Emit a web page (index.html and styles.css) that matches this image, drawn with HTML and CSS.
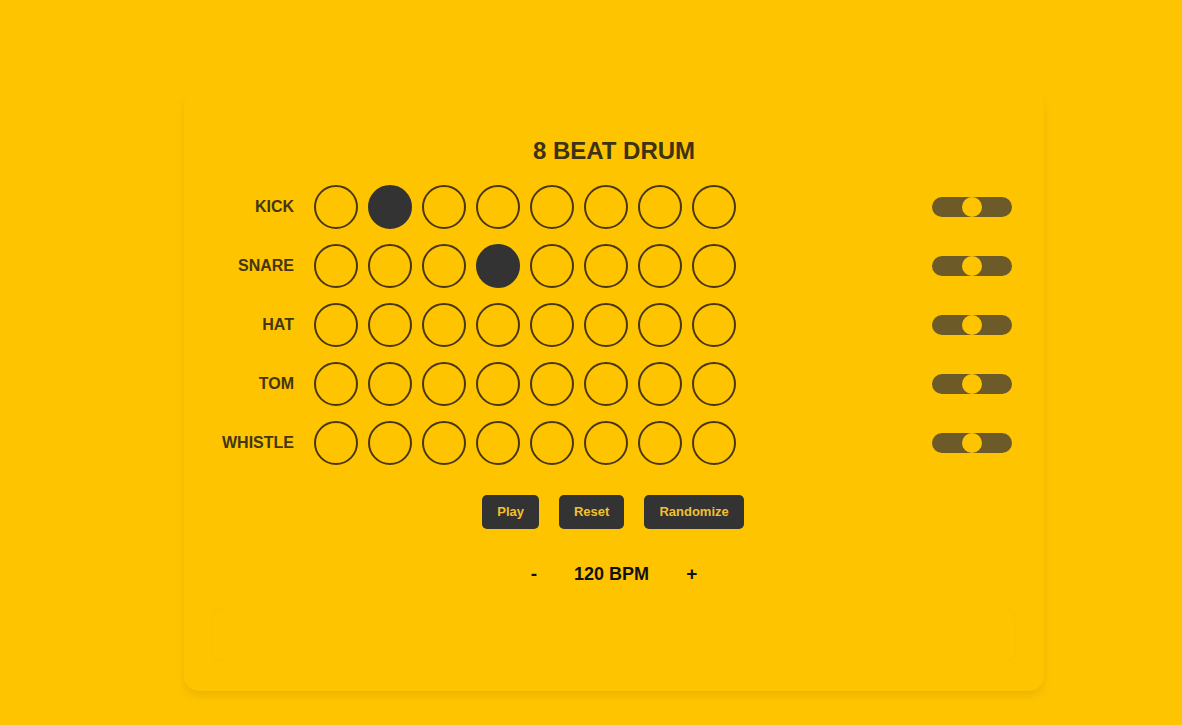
FILE: index.html
```html
<!DOCTYPE html>
<html>
<head>
<meta charset="utf-8">
<title>8 Beat Drum</title>
<link rel="stylesheet" href="styles.css">
</head>
<body>
<div class="page">
  <div class="card">
    <h1 class="title">8 BEAT DRUM</h1>
    <div class="rows">
      <div class="row">
        <div class="label">KICK</div>
        <div class="beats">
          <span class="beat"></span><span class="beat on"></span><span class="beat"></span><span class="beat"></span><span class="beat"></span><span class="beat"></span><span class="beat"></span><span class="beat"></span>
        </div>
        <div class="slider"><span class="thumb"></span></div>
      </div>
      <div class="row">
        <div class="label">SNARE</div>
        <div class="beats">
          <span class="beat"></span><span class="beat"></span><span class="beat"></span><span class="beat on"></span><span class="beat"></span><span class="beat"></span><span class="beat"></span><span class="beat"></span>
        </div>
        <div class="slider"><span class="thumb"></span></div>
      </div>
      <div class="row">
        <div class="label">HAT</div>
        <div class="beats">
          <span class="beat"></span><span class="beat"></span><span class="beat"></span><span class="beat"></span><span class="beat"></span><span class="beat"></span><span class="beat"></span><span class="beat"></span>
        </div>
        <div class="slider"><span class="thumb"></span></div>
      </div>
      <div class="row">
        <div class="label">TOM</div>
        <div class="beats">
          <span class="beat"></span><span class="beat"></span><span class="beat"></span><span class="beat"></span><span class="beat"></span><span class="beat"></span><span class="beat"></span><span class="beat"></span>
        </div>
        <div class="slider"><span class="thumb"></span></div>
      </div>
      <div class="row">
        <div class="label">WHISTLE</div>
        <div class="beats">
          <span class="beat"></span><span class="beat"></span><span class="beat"></span><span class="beat"></span><span class="beat"></span><span class="beat"></span><span class="beat"></span><span class="beat"></span>
        </div>
        <div class="slider"><span class="thumb"></span></div>
      </div>
    </div>
    <div class="controls">
      <button class="btn">Play</button>
      <button class="btn">Reset</button>
      <button class="btn">Randomize</button>
    </div>
    <div class="tempo">
      <span class="step">-</span>
      <span class="bpm">120 BPM</span>
      <span class="step">+</span>
    </div>
    <div class="visual"></div>
  </div>
</div>
</body>
</html>
```

FILE: styles.css
```css
html, body {
  margin: 0;
  padding: 0;
  background: #ffc400;
  font-family: "Liberation Sans", Arial, sans-serif;
}

.page {
  padding: 90px 0 0 184px;
  height: 725px;
  box-sizing: border-box;
}

.card {
  width: 860px;
  box-sizing: border-box;
  padding: 47px 29px 30px 29px;
  border-radius: 15px;
  background: #ffc400;
  box-shadow: 0 5px 8px rgba(0, 0, 0, 0.08);
}

.title {
  margin: 0;
  text-align: center;
  font-size: 24px;
  line-height: 28px;
  font-weight: bold;
  color: #3d3212;
}

.rows {
  margin-top: 20px;
  display: flex;
  flex-direction: column;
  gap: 15px;
}

.row {
  display: flex;
  align-items: center;
  height: 44px;
}

.label {
  width: 81px;
  text-align: right;
  font-size: 16px;
  font-weight: bold;
  color: #433612;
  margin-right: 20px;
}

.beats {
  display: flex;
  gap: 10px;
}

.beat {
  width: 40px;
  height: 40px;
  border: 2px solid #4a3712;
  border-radius: 50%;
  display: block;
}

.beat.on {
  background: #333333;
  border-color: #333333;
}

.slider {
  margin-left: auto;
  margin-right: 3px;
  width: 80px;
  height: 20px;
  border-radius: 10px;
  background: #6c5a28;
  display: flex;
  align-items: center;
  justify-content: center;
}

.thumb {
  width: 20px;
  height: 20px;
  border-radius: 50%;
  background: #ffc400;
  display: block;
}

.controls {
  margin-top: 30px;
  display: flex;
  justify-content: center;
  gap: 20px;
  padding-right: 2px;
}

.btn {
  border: none;
  margin: 0;
  background: #333333;
  color: #f3c02e;
  font-family: "Liberation Sans", Arial, sans-serif;
  font-weight: bold;
  font-size: 13px;
  line-height: 16px;
  padding: 9px 15px;
  height: 34px;
  border-radius: 5px;
}

.tempo {
  margin-top: 34px;
  display: flex;
  justify-content: center;
  align-items: center;
  gap: 37px;
  font-size: 18px;
  line-height: 22px;
  font-weight: bold;
  color: #111111;
}

.step {
  font-weight: bold;
  font-size: 19px;
}

.bpm {
  font-weight: bold;
}

.visual {
  margin-top: 24px;
  height: 52px;
  border-radius: 8px;
  box-shadow: 0 0 1px rgba(0, 0, 0, 0.12);
}
```
